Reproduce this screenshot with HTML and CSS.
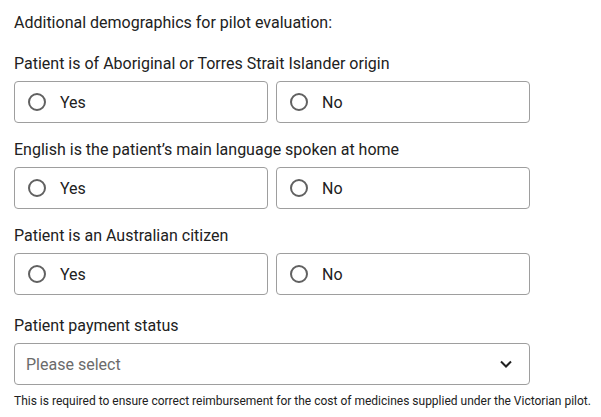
FILE: index.html
```html
<!DOCTYPE html>
<html lang="en">
<head>
    <meta charset="UTF-8">
    <meta name="viewport" content="width=device-width, initial-scale=1.0">
    <title>Pilot demographics</title>
    <link rel="stylesheet" href="styles.css">
</head>
<body>
    <!-- Demographics form -->
    <form class="demographics">
        <p class="intro">Additional demographics for pilot evaluation:</p>

        <div class="question">
            <div class="question-label">Patient is of Aboriginal or Torres Strait Islander origin</div>
            <div class="options">
                <label class="option"><input type="radio" name="atsi" value="yes"><span class="dot"></span>Yes</label>
                <label class="option"><input type="radio" name="atsi" value="no"><span class="dot"></span>No</label>
            </div>
        </div>

        <div class="question">
            <div class="question-label">English is the patient’s main language spoken at home</div>
            <div class="options">
                <label class="option"><input type="radio" name="english" value="yes"><span class="dot"></span>Yes</label>
                <label class="option"><input type="radio" name="english" value="no"><span class="dot"></span>No</label>
            </div>
        </div>

        <div class="question">
            <div class="question-label">Patient is an Australian citizen</div>
            <div class="options">
                <label class="option"><input type="radio" name="citizen" value="yes"><span class="dot"></span>Yes</label>
                <label class="option"><input type="radio" name="citizen" value="no"><span class="dot"></span>No</label>
            </div>
        </div>

        <div class="question payment">
            <div class="question-label">Patient payment status</div>
            <div class="select">
                <span class="placeholder">Please select</span>
                <svg class="chevron" width="14" height="14" viewBox="0 0 14 14">
                    <path d="M2 4.5 L7 9.5 L12 4.5" fill="none" stroke="#212121" stroke-width="2"/>
                </svg>
            </div>
            <div class="hint">This is required to ensure correct reimbursement for the cost of medicines supplied under the Victorian pilot.</div>
        </div>
    </form>
</body>
</html>
```

FILE: styles.css
```css
/* General page styles */
body {
    font-family: Roboto, "Liberation Sans", sans-serif;
    margin: 0;
    padding: 0;
    background-color: #fff;
    color: #212121;
}
.demographics {
    width: 516px;
    padding: 11px 14px 0;
}
.intro {
    margin: 0 0 16px;
    font-size: 16px;
    line-height: 24px;
}
/* Question blocks */
.question {
    margin-bottom: 14px;
}
.question-label {
    font-size: 16px;
    line-height: 24px;
    padding-top: 1px;
    margin-bottom: 5px;
}
.options {
    display: grid;
    grid-template-columns: 1fr 1fr;
    gap: 8px;
}
.option {
    display: flex;
    align-items: center;
    height: 42px;
    box-sizing: border-box;
    padding-left: 13px;
    border: 1px solid #9e9e9e;
    border-radius: 4px;
    font-size: 16px;
    cursor: pointer;
}
.option input {
    display: none;
}
.option .dot {
    width: 14px;
    height: 14px;
    border: 2.5px solid #616161;
    border-radius: 50%;
    margin-right: 14px;
}
/* Payment select */
.payment {
    padding-top: 4px;
}
.select {
    display: flex;
    align-items: center;
    justify-content: space-between;
    height: 42px;
    box-sizing: border-box;
    padding: 0 16px 0 11px;
    border: 1px solid #9e9e9e;
    border-radius: 4px;
    font-size: 16px;
}
.placeholder {
    color: #6b6b6b;
}
.hint {
    margin-top: 8px;
    font-size: 12px;
    line-height: 16px;
    white-space: nowrap;
}
```
